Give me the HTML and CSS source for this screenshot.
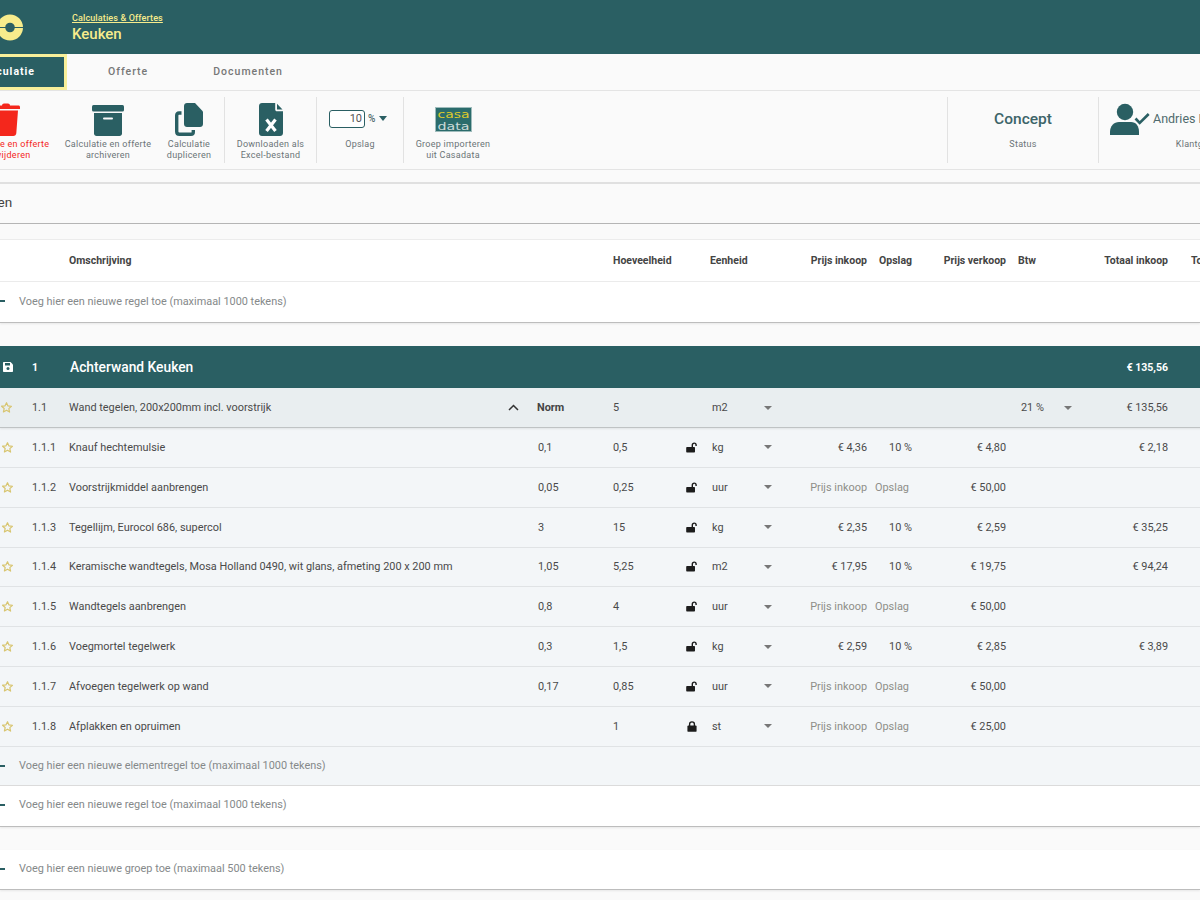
FILE: index.html
```html
<!DOCTYPE html>
<html lang="nl">
<head>
<meta charset="utf-8">
<title>Keuken</title>
<link rel="stylesheet" href="styles.css">
</head>
<body>
<svg class="defs" width="0" height="0" aria-hidden="true">
  <symbol id="star" viewBox="0 0 24 24"><path d="M12 3.2l2.7 5.9 6.4.7-4.8 4.3 1.4 6.3L12 17l-5.7 3.2 1.4-6.3-4.8-4.3 6.4-.7z" fill="none" stroke="#d8c56f" stroke-width="2.2" stroke-linejoin="round"/></symbol>
  <symbol id="lock-open" viewBox="0 0 12 11"><path d="M1 5h7.2c.5 0 .8.3.8.8v3.6c0 .6-.4 1-1 1H1.200c-.6 0-1-.4-1-1V5.800C.2 5.300.5 5 1 5z" fill="#1c1c1c"/><path d="M6.300 5V3.100c0-1.200.8-2 1.900-2s1.900.8 1.900 2v.9" fill="none" stroke="#1c1c1c" stroke-width="1.400"/></symbol>
  <symbol id="lock" viewBox="0 0 12 12"><path d="M2 5h8c.6 0 1 .4 1 1v4.800c0 .6-.4 1-1 1H2c-.6 0-1-.4-1-1V6c0-.6.4-1 1-1z" fill="#1c1c1c"/><path d="M3.400 5.500V3.400C3.400 2 4.500 1 6 1s2.600 1 2.600 2.400v2.100" fill="none" stroke="#1c1c1c" stroke-width="1.500"/></symbol>
</svg>

<header class="topbar">
  <svg class="logo" width="27" height="27" viewBox="0 0 27 27"><circle cx="13" cy="13.500" r="13" fill="#f7ec8c"/><rect x="0" y="13" width="27" height="1" fill="#2a5f63"/><circle cx="13" cy="13.500" r="4.800" fill="#2a5f63"/></svg>
  <div class="topbar-text">
    <a class="crumb">Calculaties &amp; Offertes</a>
    <div class="page-title">Keuken</div>
  </div>
</header>

<nav class="tabs">
  <div class="tab tab-active">Calculatie</div>
  <div class="tab tab-offerte">Offerte</div>
  <div class="tab tab-docs">Documenten</div>
</nav>

<section class="toolbar">
  <div class="tool tool-delete">
    <svg class="tool-icon" width="28" height="33" viewBox="0 0 28 33"><path d="M10 2.500C10 1.300 11 .500 12 .500h4c1 0 2 .8 2 2h8.500c.8 0 1.500.7 1.500 1.500v2H0V4c0-.8.700-1.500 1.500-1.500z" fill="#f4271c"/><path d="M2 7.500h24l-1.700 22.700c-.1 1.500-1.300 2.800-3 2.800H6.700c-1.700 0-2.900-1.300-3-2.800z" fill="#f4271c"/></svg>
    <div class="tool-label">Calculatie en offerte<br>verwijderen</div>
  </div>
  <div class="tool tool-archive">
    <svg class="tool-icon" width="32" height="33" viewBox="0 0 32 33"><rect x="0" y="2" width="32" height="6.500" rx="1.500" fill="#2a5f63"/><path d="M2 10h28v20.500c0 1.400-1.100 2.500-2.500 2.500h-23C3.100 33 2 31.900 2 30.500z" fill="#2a5f63"/><rect x="11" y="14.500" width="10" height="2" rx="1" fill="#fafafa"/></svg>
    <div class="tool-label">Calculatie en offerte<br>archiveren</div>
  </div>
  <div class="tool tool-copy">
    <svg class="tool-icon" width="28" height="33" viewBox="0 0 28 33"><path d="M12 0h8l8 8.500V21c0 1.700-1.300 3-3 3H12c-1.700 0-3-1.300-3-3V3c0-1.700 1.300-3 3-3z" fill="#2a5f63"/><path d="M6.500 10H4C2.500 10 1.700 11 1.700 12.500V28.500c0 1.600 1.100 2.800 2.800 2.800h11.500c1.500 0 2.300-1 2.300-2.300V27" fill="none" stroke="#2a5f63" stroke-width="3.400"/></svg>
    <div class="tool-label">Calculatie<br>dupliceren</div>
  </div>
  <div class="sep sep-a"></div>
  <div class="tool tool-excel">
    <svg class="tool-icon" width="24" height="33" viewBox="0 0 24 33"><path d="M3 0h13.200v6.500c0 1 .8 1.800 1.800 1.800H24V30c0 1.700-1.300 3-3 3H3c-1.700 0-3-1.300-3-3V3c0-1.700 1.300-3 3-3z" fill="#2a5f63"/><path d="M18 .8l5.500 5.700H18z" fill="#2a5f63"/><path d="M7.500 16.500l9 11.500M16.500 16.500l-9 11.500" stroke="#fff" stroke-width="3.200"/></svg>
    <div class="tool-label">Downloaden als<br>Excel-bestand</div>
  </div>
  <div class="sep"></div>
  <div class="tool tool-markup">
    <div class="markup-control">
      <div class="markup-input">10</div>
      <span class="markup-unit">%</span>
      <span class="markup-caret"></span>
    </div>
    <div class="tool-label markup-label">Opslag</div>
  </div>
  <div class="sep"></div>
  <div class="tool tool-casa">
    <svg class="casa-logo" width="37" height="25" viewBox="0 0 37 25"><rect x=".5" y=".5" width="36" height="24" fill="#2b6c6c" stroke="#9fbcbc"/><text x="2.500" y="11" textLength="32" lengthAdjust="spacingAndGlyphs" class="casa-top">casa</text><text x="2.500" y="22.500" textLength="32" lengthAdjust="spacingAndGlyphs" class="casa-bottom">data</text></svg>
    <div class="tool-label">Groep importeren<br>uit Casadata</div>
  </div>
  <div class="toolbar-spacer"></div>
  <div class="sep"></div>
  <div class="tool tool-status">
    <div class="status-value">Concept</div>
    <div class="tool-label status-label">Status</div>
  </div>
  <div class="sep"></div>
  <div class="tool tool-client">
    <div class="client-row">
      <svg class="client-icon" width="40" height="32" viewBox="0 0 40 32"><circle cx="15" cy="9" r="8.200" fill="#2a5f63"/><path d="M0 32v-3c0-6 4-10 9-10h12c5 0 8 4 8 10v3z" fill="#2a5f63"/><path d="M25.500 15.500l4.200 4.500 9-9" fill="none" stroke="#2a5f63" stroke-width="2.600"/></svg>
      <span class="client-name">Andries Klant</span>
    </div>
    <div class="tool-label client-label">Klantgegevens</div>
  </div>
</section>

<div class="title-field">Keuken</div>

<section class="panel">
  <div class="row head-row">
    <span class="c-desc">Omschrijving</span>
    <span class="c-qty">Hoeveelheid</span>
    <span class="c-unit head-unit">Eenheid</span>
    <span class="c-buy">Prijs inkoop</span>
    <span class="c-markup-r">Opslag</span>
    <span class="c-sell">Prijs verkoop</span>
    <span class="c-vat">Btw</span>
    <span class="c-total">Totaal inkoop</span>
    <span class="c-last">Totaal</span>
  </div>
  <div class="add-row add-row-end add-row-first"><span class="dash"></span>Voeg hier een nieuwe regel toe (maximaal 1000 tekens)</div>
</section>

<section class="group">
  <div class="row group-row">
    <svg class="c-star save" width="10" height="10" viewBox="0 0 10 10"><path d="M1 0h6.500L10 2.500V9c0 .6-.4 1-1 1H1c-.6 0-1-.4-1-1V1c0-.6.4-1 1-1z" fill="#fff"/><rect x="2" y="1" width="5" height="2.500" fill="#2a5f63"/><circle cx="5" cy="6.600" r="1.500" fill="#2a5f63"/></svg>
    <span class="c-num">1</span>
    <span class="c-desc group-title">Achterwand Keuken</span>
    <span class="c-total">€ 135,56</span>
  </div>

  <div class="row parent-row">
    <svg class="c-star star star-parent"><use href="#star"/></svg>
    <span class="c-num">1.1</span>
    <span class="c-desc">Wand tegelen, 200x200mm incl. voorstrijk</span>
    <svg class="chevron" width="11" height="7" viewBox="0 0 11 7"><path d="M1 6l4.500-4.500L10 6" fill="none" stroke="#333" stroke-width="1.500"/></svg>
    <span class="c-norm norm-head">Norm</span>
    <span class="c-qty">5</span>
    <span class="c-unit">m2</span>
    <span class="c-caret caret"></span>
    <span class="c-vat vat-val">21 %</span>
    <span class="c-vat-caret caret"></span>
    <span class="c-total">€ 135,56</span>
  </div>

  <div class="row item-row">
    <svg class="c-star star"><use href="#star"/></svg>
    <span class="c-num">1.1.1</span>
    <span class="c-desc">Knauf hechtemulsie</span>
    <span class="c-norm">0,1</span>
    <span class="c-qty">0,5</span>
    <svg class="c-lock lock-icon"><use href="#lock-open"/></svg>
    <span class="c-unit">kg</span>
    <span class="c-caret caret"></span>
    <span class="c-buy">€ 4,36</span>
    <span class="c-markup-r">10 %</span>
    <span class="c-sell">€ 4,80</span>
    <span class="c-total">€ 2,18</span>
  </div>

  <div class="row item-row">
    <svg class="c-star star"><use href="#star"/></svg>
    <span class="c-num">1.1.2</span>
    <span class="c-desc">Voorstrijkmiddel aanbrengen</span>
    <span class="c-norm">0,05</span>
    <span class="c-qty">0,25</span>
    <svg class="c-lock lock-icon"><use href="#lock-open"/></svg>
    <span class="c-unit">uur</span>
    <span class="c-caret caret"></span>
    <span class="c-buy muted">Prijs inkoop</span>
    <span class="c-markup muted">Opslag</span>
    <span class="c-sell">€ 50,00</span>
  </div>

  <div class="row item-row">
    <svg class="c-star star"><use href="#star"/></svg>
    <span class="c-num">1.1.3</span>
    <span class="c-desc">Tegellijm, Eurocol 686, supercol</span>
    <span class="c-norm">3</span>
    <span class="c-qty">15</span>
    <svg class="c-lock lock-icon"><use href="#lock-open"/></svg>
    <span class="c-unit">kg</span>
    <span class="c-caret caret"></span>
    <span class="c-buy">€ 2,35</span>
    <span class="c-markup-r">10 %</span>
    <span class="c-sell">€ 2,59</span>
    <span class="c-total">€ 35,25</span>
  </div>

  <div class="row item-row">
    <svg class="c-star star"><use href="#star"/></svg>
    <span class="c-num">1.1.4</span>
    <span class="c-desc">Keramische wandtegels, Mosa Holland 0490, wit glans, afmeting 200 x 200 mm</span>
    <span class="c-norm">1,05</span>
    <span class="c-qty">5,25</span>
    <svg class="c-lock lock-icon"><use href="#lock-open"/></svg>
    <span class="c-unit">m2</span>
    <span class="c-caret caret"></span>
    <span class="c-buy">€ 17,95</span>
    <span class="c-markup-r">10 %</span>
    <span class="c-sell">€ 19,75</span>
    <span class="c-total">€ 94,24</span>
  </div>

  <div class="row item-row">
    <svg class="c-star star"><use href="#star"/></svg>
    <span class="c-num">1.1.5</span>
    <span class="c-desc">Wandtegels aanbrengen</span>
    <span class="c-norm">0,8</span>
    <span class="c-qty">4</span>
    <svg class="c-lock lock-icon"><use href="#lock-open"/></svg>
    <span class="c-unit">uur</span>
    <span class="c-caret caret"></span>
    <span class="c-buy muted">Prijs inkoop</span>
    <span class="c-markup muted">Opslag</span>
    <span class="c-sell">€ 50,00</span>
  </div>

  <div class="row item-row">
    <svg class="c-star star"><use href="#star"/></svg>
    <span class="c-num">1.1.6</span>
    <span class="c-desc">Voegmortel tegelwerk</span>
    <span class="c-norm">0,3</span>
    <span class="c-qty">1,5</span>
    <svg class="c-lock lock-icon"><use href="#lock-open"/></svg>
    <span class="c-unit">kg</span>
    <span class="c-caret caret"></span>
    <span class="c-buy">€ 2,59</span>
    <span class="c-markup-r">10 %</span>
    <span class="c-sell">€ 2,85</span>
    <span class="c-total">€ 3,89</span>
  </div>

  <div class="row item-row">
    <svg class="c-star star"><use href="#star"/></svg>
    <span class="c-num">1.1.7</span>
    <span class="c-desc">Afvoegen tegelwerk op wand</span>
    <span class="c-norm">0,17</span>
    <span class="c-qty">0,85</span>
    <svg class="c-lock lock-icon"><use href="#lock-open"/></svg>
    <span class="c-unit">uur</span>
    <span class="c-caret caret"></span>
    <span class="c-buy muted">Prijs inkoop</span>
    <span class="c-markup muted">Opslag</span>
    <span class="c-sell">€ 50,00</span>
  </div>

  <div class="row item-row">
    <svg class="c-star star"><use href="#star"/></svg>
    <span class="c-num">1.1.8</span>
    <span class="c-desc">Afplakken en opruimen</span>
    <span class="c-qty">1</span>
    <svg class="c-lock lock-icon"><use href="#lock"/></svg>
    <span class="c-unit">st</span>
    <span class="c-caret caret"></span>
    <span class="c-buy muted">Prijs inkoop</span>
    <span class="c-markup muted">Opslag</span>
    <span class="c-sell">€ 25,00</span>
  </div>

  <div class="add-row add-row-element"><span class="dash"></span>Voeg hier een nieuwe elementregel toe (maximaal 1000 tekens)</div>
  <div class="add-row add-row-end add-row-last"><span class="dash"></span>Voeg hier een nieuwe regel toe (maximaal 1000 tekens)</div>
</section>

<section class="new-group">
  <div class="add-row add-row-end"><span class="dash"></span>Voeg hier een nieuwe groep toe (maximaal 500 tekens)</div>
</section>
</body>
</html>
```

FILE: styles.css
```css
* { box-sizing: border-box; }
html, body { margin: 0; height: 900px; overflow: hidden; }
body {
  width: 1200px;
  background: #fafafa;
  font-family: Roboto, "Liberation Sans", sans-serif;
  font-size: 10.9px;
  color: #4a4a4a;
}
.defs { display: block; height: 0; }

.topbar {
  height: 54px;
  background: #2a5f63;
  display: flex;
  align-items: center;
}
.logo { margin-left: -3px; flex: none; }
.topbar-text { margin-left: 48px; padding-top: 3px; color: #f7ec8c; }
.crumb {
  display: block;
  font-size: 9px;
  font-weight: 500;
  line-height: 11px;
  text-decoration: underline;
  letter-spacing: .13px;
}
.page-title { font-size: 15px; font-weight: 500; line-height: 20px; margin-top: 0; }

.tabs {
  height: 37px;
  display: flex;
  border-bottom: 1px solid #e4e4e4;
}
.tab { font-weight: 500; font-size: 10.5px; letter-spacing: 1px; color: #777; line-height: 36px; }
.tab-active {
  width: 121px;
  margin-left: -54px;
  height: 36px;
  text-align: center;
  background: #2a5f63;
  color: #fff;
  border: 3px solid #f8ef9a;
  line-height: 30px;
  font-weight: 700;
}
.tab-offerte { margin-left: 41px; }
.tab-docs { margin-left: 65px; }

.toolbar {
  height: 79px;
  display: flex;
  align-items: stretch;
  padding: 6px 0;
  margin-right: -115px;
  border-bottom: 1px solid #e4e4e4;
}
.sep { width: 1px; background: #e2e2e2; flex: none; }
.sep-a { margin-left: 6px; }
.tool {
  flex: none;
  display: flex;
  flex-direction: column;
  align-items: center;
  text-align: center;
  padding-top: 6px;
  white-space: nowrap;
}
.tool-icon { display: block; height: 33px; flex: none; }
.tool-label {
  font-size: 9px;
  line-height: 11px;
  letter-spacing: .27px;
  color: #6b7477;
  margin-top: 3px;
}
.tool-delete { width: 100px; margin-left: -44px; }
.tool-delete .tool-label { color: #f4271c; }
.tool-archive { width: 104px; }
.tool-copy { width: 58px; }
.tool-excel { width: 91px; }
.tool-markup { width: 86px; }
.tool-casa { width: 98px; }
.toolbar-spacer { flex: 1; }
.tool-status { width: 150px; }
.tool-client { width: 216px; }

.markup-control { height: 33px; display: flex; align-items: center; width: 100%; padding: 0 0 2px 12px; }
.markup-input {
  width: 36px;
  height: 18px;
  border: 1.5px solid #2a5f63;
  border-radius: 3px;
  text-align: right;
  padding-right: 2px;
  line-height: 15px;
  font-size: 11px;
  color: #555;
  background: #fff;
}
.markup-unit { font-size: 10px; margin-left: 3px; color: #4f6a6d; font-weight: 500; }
.markup-caret {
  margin-left: 4px;
  border-left: 4.5px solid transparent;
  border-right: 4.5px solid transparent;
  border-top: 5px solid #2a5f63;
}
.markup-label { margin-top: 3px; }

.casa-logo { margin-top: 4px; margin-bottom: 4px; flex: none; }
.casa-top, .casa-bottom { font-family: "DejaVu Sans", sans-serif; font-size: 10.5px; }
.casa-top { fill: #dcc92c; }
.casa-bottom { fill: #ccdad8; }

.status-value { height: 33px; font-size: 15.5px; font-weight: 500; color: #3c6468; line-height: 33px; }
.status-label { margin-top: 3px; }
.client-row { height: 33px; display: flex; align-items: center; width: 100%; padding-left: 11px; }
.client-icon { flex: none; margin-bottom: 1px; }
.client-name { font-size: 12.5px; color: #4f6a6d; margin-left: 3px; margin-bottom: 2px; }
.client-label { margin-top: 3px; }

.title-field {
  height: 42px;
  margin: 12px 0 15px -32px;
  border-top: 2px solid #e0e0e0;
  border-bottom: 1px solid #b5b5b5;
  line-height: 36px;
  font-size: 13.5px;
  color: #444;
}

.row {
  display: grid;
  grid-template-columns: 32px 37px 468px 76px 72px 27px 48px 16px 91px 49px 90px 54px 16px 92px 100px;
  align-items: center;
  width: 1300px;
  white-space: nowrap;
}
.row > * { grid-row: 1; }
.c-star { grid-column: 1; justify-self: start; }
.c-num { grid-column: 2; }
.c-desc { grid-column: 3; }
.c-norm { grid-column: 4; padding-left: 1px; }
.c-qty { grid-column: 5; }
.c-lock { grid-column: 6; justify-self: start; }
.c-unit { grid-column: 7; }
.c-caret { grid-column: 8; }
.c-buy { grid-column: 9; justify-self: end; }
.c-markup { grid-column: 10; padding-left: 8px; }
.c-markup-r { grid-column: 10; justify-self: end; padding-right: 4px; }
.c-sell { grid-column: 11; justify-self: end; }
.c-vat { grid-column: 12; padding-left: 12px; }
.c-vat-caret { grid-column: 13; }
.c-total { grid-column: 14; justify-self: end; }
.c-last { grid-column: 15; padding-left: 23px; }

.panel { background: #fff; }
.head-row {
  height: 43px;
  border-top: 1px solid #ececec;
  border-bottom: 1px solid #ececec;
  font-weight: 700;
  font-size: 10.5px;
  color: #444;
}
.head-unit { margin-left: -2px; }
.add-row {
  height: 40px;
  display: flex;
  align-items: center;
  padding: 0 0 2px 19px;
  color: #85898a;
  position: relative;
  white-space: nowrap;
}
.add-row-end {
  background: #fff;
  border-bottom: 1.5px solid #bdbdbd;
  box-shadow: 0 1px 2px rgba(0, 0, 0, .08);
}
.add-row-first { height: 41px; }
.add-row-last { height: 41px; padding-bottom: 3px; }
.add-row-element { height: 39px; padding-bottom: 0; background: #f3f6f8; border-bottom: 1px solid #dcdcdc; }
.dash {
  position: absolute;
  left: 0;
  top: 18px;
  width: 5px;
  height: 2px;
  background: #2a5f63;
}

.group { margin-top: 23px; }
.group-row {
  height: 42px;
  background: #2a5f63;
  color: #fff;
  font-weight: 700;
  font-size: 10.5px;
}
.group-title { font-size: 13.8px; font-weight: 500; padding-left: 1px; }
.save { margin-left: 3px; }
.parent-row {
  height: 40px;
  background: #e9eef0;
  border-bottom: 1.5px solid #bfc3c4;
  box-shadow: 0 1px 2px rgba(0, 0, 0, .08);
  position: relative;
}
.norm-head { font-weight: 700; color: #444; padding-left: 0; }
.chevron { grid-column: 3; justify-self: start; margin-left: 439px; }
.vat-val { padding-left: 15px; }
.item-row {
  height: 39.85px;
  background: #f3f6f8;
  border-bottom: 1px solid #e0e3e5;
}
.star { width: 13px; height: 13px; margin-left: 1px; }
.star-parent { margin-left: 0; }
.lock-icon { width: 12px; height: 11px; margin-left: 1px; }
.caret {
  justify-self: center;
  width: 0;
  height: 0;
  border-left: 4px solid transparent;
  border-right: 4px solid transparent;
  border-top: 4px solid #777;
}
.muted { color: #8e8e88; }
.new-group { margin-top: 23px; }
```
